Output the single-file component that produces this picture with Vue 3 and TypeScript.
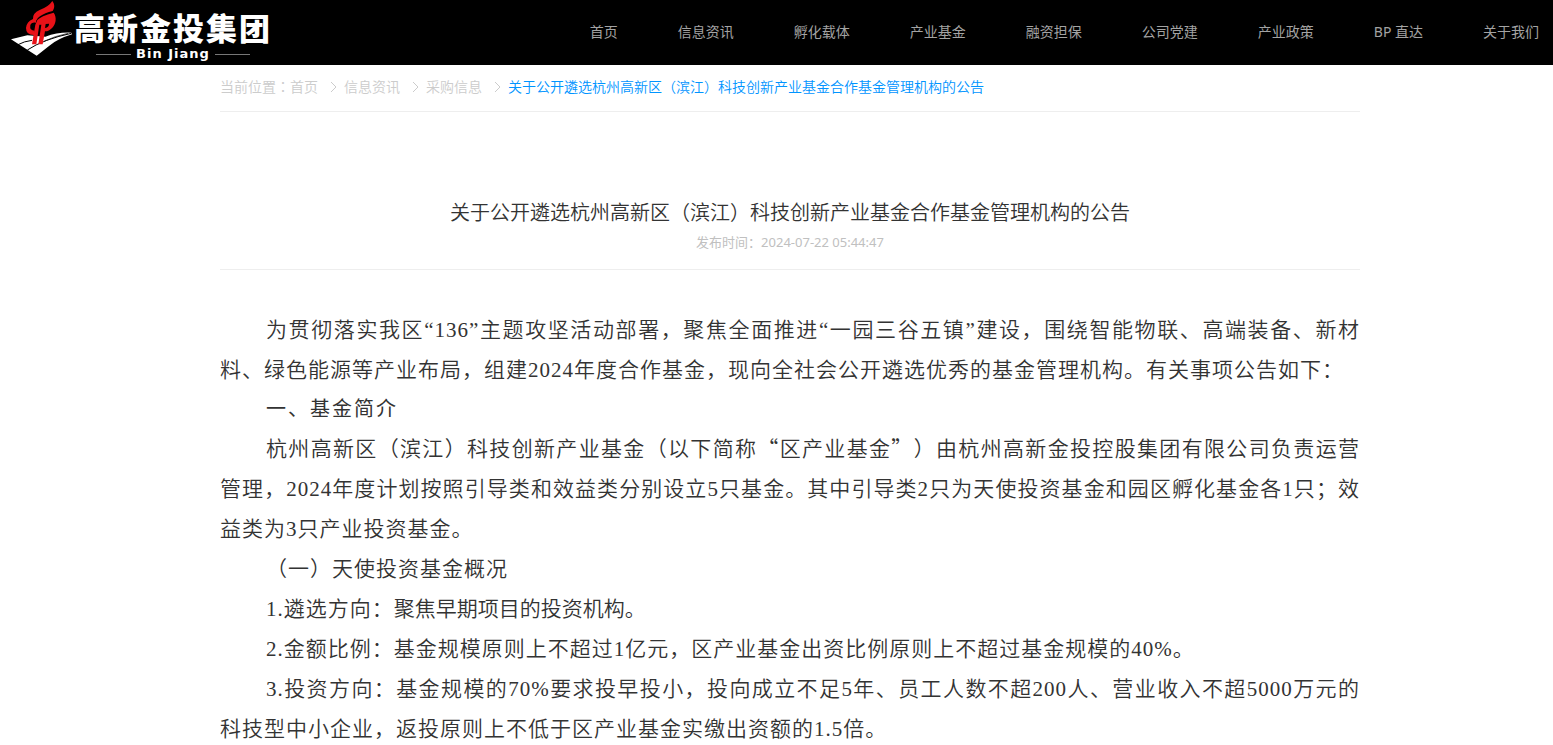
<script setup lang="ts">
const navItems: string[] = [
  '首页', '信息资讯', '孵化载体', '产业基金', '融资担保', '公司党建', '产业政策', 'BP 直达', '关于我们',
]
const crumbs: string[] = ['首页', '信息资讯', '采购信息']
const title = '关于公开遴选杭州高新区（滨江）科技创新产业基金合作基金管理机构的公告'
</script>

<template>
  <div class="page">
    <header class="topbar">
      <a class="brand" href="#" aria-label="高新金投集团">
        <svg class="emblem" width="66" height="58" viewBox="0 0 198 174" aria-hidden="true">
          <path fill="#fff" d="M9 118 L58 106 L112 110 Q150 96 190 98 L192 103 Q150 116 124 137 L86 167 Z" />
          <path fill="none" stroke="#000" stroke-width="3" d="M30 134 Q48 124 72 121 M58 150 Q106 118 190 100" />
          <path fill="none" stroke="#000" stroke-width="2" d="M108 124 Q140 108 180 100" />
          <path fill="#e81218" d="M133 3 C142 14 139 26 134 33 Q110 39 96 49 Q86 55 84 63 L84 68 Q70 66 67 76 Q64 92 80 92 L79 105 Q54 106 54 84 Q56 64 75 57 Q73 40 95 30 Q122 20 133 3 Z" />
          <path fill="#e81218" d="M137 38 C147 52 144 72 133 83 Q123 94 111 94 L104 133 L91 133 L100 74 L94 74 L85 133 L72 133 L82 74 L88 60 Q98 48 137 38 Z" />
          <path fill="#000" d="M113 72 L123 71 Q124 81 111 84 Z" />
        </svg>
        <span class="wordmark">
          <span class="brand-name">高新金投集团</span>
          <span class="brand-sub">Bin Jiang</span>
        </span>
      </a>
      <nav class="nav">
        <a v-for="item in navItems" :key="item" href="#">{{ item }}</a>
      </nav>
    </header>

    <main class="main">
      <div class="container">
        <nav class="crumbs" aria-label="当前位置">
          <span>当前位置<span class="colon">：</span></span>
          <template v-for="c in crumbs" :key="c">
            <a href="#">{{ c }}</a>
            <svg class="chevron" width="7" height="12" viewBox="0 0 7 12" aria-hidden="true">
              <path d="M1 1 L6 6 L1 11" fill="none" stroke="#ccc" stroke-width="1" />
            </svg>
          </template>
          <a class="current" href="#">{{ title }}</a>
        </nav>

        <article>
          <header class="heading">
            <h1>{{ title }}</h1>
            <p>发布时间：2024-07-22 05:44:47</p>
          </header>
          <div class="body">
            <p>为贯彻落实我区“136”主题攻坚活动部署，聚焦全面推进“一园三谷五镇”建设，围绕智能物联、高端装备、新材料、绿色能源等产业布局，组建2024年度合作基金，现向全社会公开遴选优秀的基金管理机构。有关事项公告如下：</p>
            <h2>一、基金简介</h2>
            <p>杭州高新区（滨江）科技创新产业基金（以下简称<span class="cjk">“区产业基金”</span>）由杭州高新金投控股集团有限公司负责运营管理，2024年度计划按照引导类和效益类分别设立5只基金。其中引导类2只为天使投资基金和园区孵化基金各1只；效益类为3只产业投资基金。</p>
            <p>（一）天使投资基金概况</p>
            <p>1.遴选方向：<span class="tight">聚焦早期项目的投资机构。</span></p>
            <p>2.金额比例：基金规模原则上不超过1亿元，区产业基金出资比例原则上不超过基金规模的40%。</p>
            <p>3.投资方向：基金规模的70%要求投早投小，投向成立不足5年、员工人数不超200人、营业收入不超5000万元的科技型中小企业，返投原则上不低于区产业基金实缴出资额的1.5倍。</p>
          </div>
        </article>
      </div>
    </main>
  </div>
</template>

<style>
body {
  margin: 0;
  background: #fff;
}
</style>

<style scoped>
.page {
  font-family: "Noto Sans", "Noto Sans CJK SC", sans-serif;
  font-size: 14px;
  font-weight: 350;
  color: #333;
  text-spacing-trim: space-all;
}
a {
  color: inherit;
  text-decoration: none;
}
.topbar {
  display: flex;
  justify-content: space-between;
  height: 65px;
  background: #000;
}
.brand {
  display: flex;
  align-items: flex-start;
  padding-left: 8px;
  color: #fff;
}
.wordmark {
  display: flex;
  flex-direction: column;
  padding-top: 8px;
}
.brand-name {
  font: 900 31px/38px "Noto Sans CJK SC", sans-serif;
  letter-spacing: 2px;
}
.brand-sub {
  display: flex;
  align-items: center;
  justify-content: center;
  gap: 5px;
  font: 700 13px/16px "DejaVu Sans", sans-serif;
  letter-spacing: 1px;
}
.brand-sub::before,
.brand-sub::after {
  content: "";
  width: 35px;
  height: 1px;
  background: #777;
}
.nav {
  display: flex;
  align-items: center;
  gap: 60px;
  padding: 0 14px 4px 0;
  color: #a3a3a3;
  font-weight: 400;
  white-space: nowrap;
}
.main {
  padding-left: 27px;
}
.container {
  max-width: 1140px;
  margin: 0 auto;
}
.crumbs {
  display: flex;
  align-items: center;
  height: 42px;
  padding-bottom: 4px;
  border-bottom: 1px solid #eee;
  color: #ccc;
}
.colon {
  font-family: "Noto Sans CJK TC", sans-serif;
}
.chevron {
  margin: 2px 7px 0 12px;
}
.current {
  color: #0094ff;
}
.heading {
  padding: 84px 0 15px;
  border-bottom: 1px solid #eee;
  text-align: center;
}
.heading h1 {
  margin: 0;
  font-size: 20px;
  font-weight: 350;
  line-height: 34px;
}
.heading p {
  margin: 0;
  font-size: 13px;
  font-weight: 400;
  line-height: 24px;
  color: #c0c0c0;
}
.body {
  padding-top: 40px;
  font-family: "Liberation Serif", "Noto Sans CJK SC", serif;
  font-size: 21px;
  line-height: 40px;
  letter-spacing: 1px;
  text-align: justify;
}
.body p {
  margin: 0;
  text-indent: 46px;
}
.body h2 {
  margin: 0;
  padding-left: 46px;
  font-size: 20px;
  font-weight: 400;
  line-height: 39px;
  letter-spacing: 2px;
}
.cjk {
  font-family: "Noto Sans CJK SC", sans-serif;
  line-height: 1;
}
.tight {
  letter-spacing: 0;
}
</style>
